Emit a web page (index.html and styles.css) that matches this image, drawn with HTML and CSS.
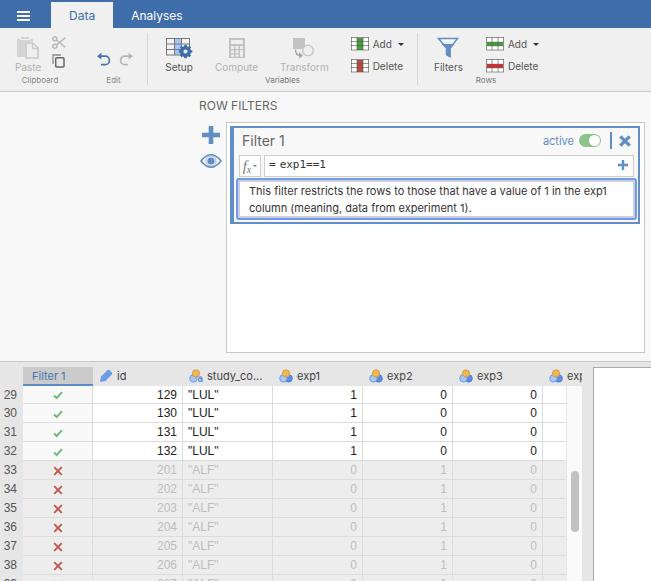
FILE: index.html
```html
<!DOCTYPE html>
<html lang="en">
<head>
<meta charset="utf-8">
<title>Row filters</title>
<link rel="stylesheet" href="styles.css">
</head>
<body>
<svg class="defs" aria-hidden="true">
  <symbol id="nominal" viewBox="0 0 14 14">
    <circle cx="9.6" cy="9.4" r="3.7" fill="#5b8fe6" stroke="#4a7dd6"/>
    <circle cx="4.4" cy="9.4" r="3.7" fill="#a9c6f5" stroke="#6d9be8"/>
    <circle cx="7" cy="4.4" r="3.6" fill="#efb75c" stroke="#d79a3c"/>
  </symbol>
  <symbol id="nominal-text" viewBox="0 0 14 14">
    <circle cx="4.4" cy="9.4" r="3.7" fill="#a9c6f5" stroke="#6d9be8"/>
    <circle cx="7" cy="4.4" r="3.6" fill="#efb75c" stroke="#d79a3c"/>
    <circle cx="11" cy="10.8" r="1.6" fill="none" stroke="#5b8fe6" stroke-width="1.3"/>
    <path d="M9.6 8.2q3.400-.9 3.400 1.200v3.600" fill="none" stroke="#5b8fe6" stroke-width="1.300"/>
  </symbol>
  <symbol id="tick" viewBox="0 0 12 12"><path d="M2 6.5 4.7 9 10 3.2" fill="none" stroke="#6fbb7c" stroke-width="2"/></symbol>
  <symbol id="cross" viewBox="0 0 12 12"><path d="M2.2 2.2l7.6 7.6M9.8 2.2L2.2 9.8" fill="none" stroke="#c4554d" stroke-width="1.9"/></symbol>
</svg>

<header class="tabs">
  <button class="menu" aria-label="Menu"><svg width="13" height="10" viewBox="0 0 13 10"><path d="M0 1h13M0 5h13M0 9h13" stroke="#fff" stroke-width="1.8"/></svg></button>
  <button class="tab selected">Data</button>
  <button class="tab">Analyses</button>
</header>

<div class="ribbon">
  <section class="group clipboard">
    <div class="tools">
      <button class="tool off"><svg width="24" height="24" viewBox="0 0 24 24"><path d="M1 3h4V1h8v2h4v3h-8v15H1z" fill="#d5d5d5"/><path d="M4 3.5h10" stroke="#efefef"/><path d="M10 7h7l5 5v10H10z" fill="#efefef" stroke="#c8c8c8" stroke-width="1.6"/><path d="M16.5 7v5.5H22" fill="none" stroke="#c8c8c8" stroke-width="1.4"/></svg>Paste</button>
      <div class="stack">
        <button aria-label="Cut"><svg width="14" height="13" viewBox="0 0 14 13"><g fill="none" stroke="#b8b8b8" stroke-width="1.5"><circle cx="2.8" cy="2.8" r="2"/><circle cx="2.8" cy="10.2" r="2"/><path d="M4.4 4l9 7.4M4.4 9l9-7.4"/></g></svg></button>
        <button aria-label="Copy"><svg width="13" height="14" viewBox="0 0 13 14"><path d="M1 10V1h8" fill="none" stroke="#8a8a8a" stroke-width="1.3"/><rect x="3.7" y="3.7" width="8.3" height="9.3" rx="1" fill="none" stroke="#666" stroke-width="1.5"/></svg></button>
      </div>
    </div>
    <h2>Clipboard</h2>
  </section>
  <section class="group edit">
    <div class="tools">
      <button aria-label="Undo"><svg width="14" height="14" viewBox="0 0 14 14"><path d="M2 4.2h6.2a4.2 4.2 0 0 1 0 8.4H4" fill="none" stroke="#4674b2" stroke-width="1.7"/><path d="M0 4.2 4.4.8v6.8z" fill="#4674b2"/></svg></button>
      <button aria-label="Redo"><svg width="14" height="14" viewBox="0 0 14 14"><path d="M12 4.2H5.8a4.2 4.2 0 0 0 0 8.4H9" fill="none" stroke="#b5b5b5" stroke-width="1.7"/><path d="M14 4.2 9.6.8v6.8z" fill="#b5b5b5"/></svg></button>
    </div>
    <h2>Edit</h2>
  </section>
  <section class="group variables">
    <div class="tools">
      <button class="tool setup"><svg width="28" height="24" viewBox="0 0 28 24"><path d="M1 2h24v17H1z" fill="#f3f3f3"/><path d="M9.5 2h7v17h-7z" fill="#a6c5f4"/><path d="M1 2.5h24M1 8h24M1 13.500h24M1 19h24M1.500 2v17M9.500 2v17M16.500 2v17M24.500 2v17" stroke="#777" fill="none"/><circle cx="20.500" cy="15.500" r="3.800" fill="#efefef" stroke="#3e6da9" stroke-width="3.400"/><path d="M20.500 8.700v3M20.500 19.300v3M13.700 15.500h3M24.300 15.500h3M15.700 10.700l2 2M23.300 18.300l2 2M15.700 20.300l2-2M23.300 12.700l2-2" stroke="#3e6da9" stroke-width="2.600"/></svg>Setup</button>
      <button class="tool off"><svg width="24" height="24" viewBox="0 0 24 24"><path d="M4 2h16v20H4z" fill="#c2c2c2"/><path d="M6 4h12v4H6zM6 10h3v3H6zM10.500 10h3v3h-3zM15 10h3v3h-3zM6 14.200h3v3H6zM10.500 14.200h3v3h-3zM6 18.400h3v2.300H6zM10.500 18.400h3v2.300h-3zM15 14.200h3v6.500h-3z" fill="#efefef"/></svg>Compute</button>
      <button class="tool off"><svg width="24" height="24" viewBox="0 0 24 24"><path d="M1 2h12v11H1z" fill="#c2c2c2"/><circle cx="16" cy="14.500" r="5.300" fill="#efefef" stroke="#c8c8c8" stroke-width="1.500"/><path d="M3.500 13.500q0 6 5 6" fill="none" stroke="#a8a8a8" stroke-width="1.600"/><path d="M7 16l4 3.500L7 22.500z" fill="#a8a8a8"/></svg>Transform</button>
      <div class="rows">
        <button class="row"><svg width="18" height="14" viewBox="0 0 18 14"><path d="M1 1h16v12H1z" fill="#fff"/><path d="M6 1h6v12H6z" fill="#479c3c"/><path d="M0 .5h18M0 4.500h18M0 8.500h18M0 13h18M.5 0v13M6 0v13M12 0v13M17.500 0v13" stroke="#555" stroke-opacity=".6"/></svg>Add<i class="caret"></i></button>
        <button class="row"><svg width="18" height="14" viewBox="0 0 18 14"><path d="M1 1h16v12H1z" fill="#fff"/><path d="M6 1h6v12H6z" fill="#c04a42"/><path d="M0 .5h18M0 4.500h18M0 8.500h18M0 13h18M.5 0v13M6 0v13M12 0v13M17.500 0v13" stroke="#555" stroke-opacity=".6"/></svg>Delete</button>
      </div>
    </div>
    <h2>Variables</h2>
  </section>
  <section class="group rowtools">
    <div class="tools">
      <button class="tool filters"><svg width="24" height="24" viewBox="0 0 24 24"><path d="M2.500 2.600h19L14 12v8.500l-3.500-2V12z" fill="#f3f3f3" stroke="#628dc5" stroke-width="1.500"/><path d="M5.500 8h13L14.500 12.500v9.300l-4-2.500v-7z" fill="#628dc5"/></svg>Filters</button>
      <div class="rows">
        <button class="row"><svg width="18" height="14" viewBox="0 0 18 14"><path d="M1 1h16v12H1z" fill="#fff"/><path d="M1 5h16v4H1z" fill="#479c3c"/><path d="M0 .5h18M0 13h18M.5 0v13M6 0v13M12 0v13M17.500 0v13" stroke="#555" stroke-opacity=".6"/><path d="M0 5h18M0 9h18" stroke="#555" stroke-opacity=".35"/></svg>Add<i class="caret"></i></button>
        <button class="row"><svg width="18" height="14" viewBox="0 0 18 14"><path d="M1 1h16v12H1z" fill="#fff"/><path d="M1 5h16v4H1z" fill="#d03030"/><path d="M0 .5h18M0 13h18M.5 0v13M6 0v13M12 0v13M17.500 0v13" stroke="#555" stroke-opacity=".6"/><path d="M0 5h18M0 9h18" stroke="#555" stroke-opacity=".35"/></svg>Delete</button>
      </div>
    </div>
    <h2>Rows</h2>
  </section>
</div>

<main class="panel">
  <h1>ROW FILTERS</h1>
  <div class="editor">
    <div class="side">
      <button aria-label="Add filter"><svg width="18" height="18" viewBox="0 0 18 18"><path d="M9 0v18M0 9h18" stroke="#628dc5" stroke-width="4.600"/></svg></button>
      <button aria-label="Show filtered rows"><svg width="22" height="14" viewBox="0 0 22 14"><path d="M1 7q10-12.500 20 0q-10 12.500-20 0z" fill="#f8f8f8" stroke="#628dc5" stroke-width="1.600"/><circle cx="11" cy="7" r="5" fill="none" stroke="#628dc5" stroke-width=".6"/><circle cx="11" cy="7" r="3.600" fill="#628dc5"/></svg></button>
    </div>
    <div class="list">
      <article class="filter">
        <div class="title">
          <span class="name">Filter 1</span>
          <label class="active">active<input type="checkbox" role="switch" checked></label>
          <button class="close" aria-label="Remove filter"><svg width="12" height="12" viewBox="0 0 12 12"><path d="M1.300 1.300l9.400 9.400M10.700 1.300l-9.400 9.400" stroke="#628dc5" stroke-width="3.300"/></svg></button>
        </div>
        <div class="formula">
          <button class="fx" aria-label="Functions"><em>f<sub>x</sub></em><i class="caret"></i></button>
          <div class="box"><label for="expr">=</label><input id="expr" value="exp1==1"><button aria-label="Add expression"><svg width="10" height="10" viewBox="0 0 10 10"><path d="M5 0v10M0 5h10" stroke="#628dc5" stroke-width="2.400"/></svg></button></div>
        </div>
        <textarea class="note" rows="2" aria-label="Description">This filter restricts the rows to those that have a value of 1 in the exp1 column (meaning, data from experiment 1).</textarea>
      </article>
    </div>
  </div>
</main>

<div class="bottom">
  <div class="sheet">
    <table>
      <colgroup><col class="c-num"><col class="c-filter"><col><col><col><col><col><col></colgroup>
      <thead><tr><th></th><th class="fcol">Filter 1</th>
        <th><span><svg width="14" height="14" viewBox="0 0 14 14"><path d="M1 13l1-5.500L8.500 1.200q1-.8 2 0l2.300 2.300q.8 1 0 2L6.500 12z" fill="#6b9ce8"/></svg>id</span></th>
        <th><span><svg width="14" height="14"><use href="#nominal-text"/></svg>study_co...</span></th>
        <th><span><svg width="14" height="14"><use href="#nominal"/></svg>exp1</span></th>
        <th><span><svg width="14" height="14"><use href="#nominal"/></svg>exp2</span></th>
        <th><span><svg width="14" height="14"><use href="#nominal"/></svg>exp3</span></th>
        <th><span><svg width="14" height="14"><use href="#nominal"/></svg>exp4</span></th></tr></thead>
      <tbody>
        <tr><th>29</th><td class="mark"><svg><use href="#tick"/></svg></td><td>129</td><td class="text">"LUL"</td><td>1</td><td>0</td><td>0</td><td></td></tr>
        <tr><th>30</th><td class="mark"><svg><use href="#tick"/></svg></td><td>130</td><td class="text">"LUL"</td><td>1</td><td>0</td><td>0</td><td></td></tr>
        <tr><th>31</th><td class="mark"><svg><use href="#tick"/></svg></td><td>131</td><td class="text">"LUL"</td><td>1</td><td>0</td><td>0</td><td></td></tr>
        <tr><th>32</th><td class="mark"><svg><use href="#tick"/></svg></td><td>132</td><td class="text">"LUL"</td><td>1</td><td>0</td><td>0</td><td></td></tr>
        <tr class="out"><th>33</th><td class="mark"><svg><use href="#cross"/></svg></td><td>201</td><td class="text">"ALF"</td><td>0</td><td>1</td><td>0</td><td></td></tr>
        <tr class="out"><th>34</th><td class="mark"><svg><use href="#cross"/></svg></td><td>202</td><td class="text">"ALF"</td><td>0</td><td>1</td><td>0</td><td></td></tr>
        <tr class="out"><th>35</th><td class="mark"><svg><use href="#cross"/></svg></td><td>203</td><td class="text">"ALF"</td><td>0</td><td>1</td><td>0</td><td></td></tr>
        <tr class="out"><th>36</th><td class="mark"><svg><use href="#cross"/></svg></td><td>204</td><td class="text">"ALF"</td><td>0</td><td>1</td><td>0</td><td></td></tr>
        <tr class="out"><th>37</th><td class="mark"><svg><use href="#cross"/></svg></td><td>205</td><td class="text">"ALF"</td><td>0</td><td>1</td><td>0</td><td></td></tr>
        <tr class="out"><th>38</th><td class="mark"><svg><use href="#cross"/></svg></td><td>206</td><td class="text">"ALF"</td><td>0</td><td>1</td><td>0</td><td></td></tr>
        <tr class="out"><th>39</th><td class="mark"><svg><use href="#cross"/></svg></td><td>207</td><td class="text">"ALF"</td><td>0</td><td>1</td><td>0</td><td></td></tr>
      </tbody>
    </table>
    <div class="scroll"><div class="thumb"></div></div>
  </div>
  <div class="results"></div>
</div>
</body>
</html>
```
FILE: styles.css
```css
* { box-sizing: border-box; }
body {
  margin: 0;
  height: 100vh;
  display: flex;
  flex-direction: column;
  overflow: hidden;
  font: 11px/14px Inter, "Liberation Sans", sans-serif;
  color: #555;
  background: #f8f8f8;
}
button {
  font: inherit;
  color: inherit;
  background: none;
  border: 0;
  padding: 0;
}
svg { display: block; flex: none; }
h1, h2 { margin: 0; font-weight: 400; }
.defs { position: absolute; width: 0; height: 0; }

/* Tab bar */
.tabs {
  flex: none;
  display: flex;
  height: 28px;
  padding-top: 2px;
  background: #3e6da9;
  color: #fff;
}
.menu { width: 51px; padding: 2px 0 0 17px; }
.tab { padding: 2px 18px 0; font-size: 12px; }
.tab.selected { background: #f0f0f0; color: #3e6da9; }

/* Ribbon */
.ribbon {
  flex: none;
  display: flex;
  height: 64px;
  padding: 5px 0 6px;
  background: #f0f0f0;
  border-bottom: 1px solid #c8c8c8;
  font-size: 10px;
}
.group { display: flex; flex-direction: column; }
.group h2 {
  font-size: 8px;
  line-height: 10px;
  padding-top: 1px;
  text-align: center;
  color: #777;
}
.tools { display: flex; height: 43px; }
.tool {
  display: flex;
  flex-direction: column;
  align-items: center;
  padding-top: 3px;
}
.off { color: #b0b0b0; }
.clipboard { width: 80px; }
.clipboard .tools { padding-left: 15px; gap: 11px; }
.stack { display: flex; flex-direction: column; gap: 5px; padding-top: 3px; }
.edit { width: 68px; border-right: 1px solid #d6d6d6; }
.edit .tools { padding: 10px 0 0 17px; gap: 8px; align-items: center; }
.edit h2, .clipboard h2 { color: #888; }
.variables { width: 270px; border-right: 1px solid #d6d6d6; }
.variables .tools { padding-left: 17px; gap: 22px; }
.rowtools { width: 134px; margin-left: 1px; }
.rowtools .tools { padding-left: 15px; gap: 23px; }
.rows { display: flex; flex-direction: column; gap: 8px; padding-top: 4px; }
.row { display: flex; align-items: center; gap: 4px; }
.caret {
  width: 0;
  height: 0;
  margin-left: 2px;
  border: 3px solid transparent;
  border-top-color: #333;
  border-bottom-width: 0;
}

/* Filter panel */
.panel {
  flex: none;
  height: 270px;
  padding: 7px 6px 8px 199px;
  display: flex;
  flex-direction: column;
  border-bottom: 1px solid #c8c8c8;
}
h1 { font-size: 12px; line-height: 14px; color: #666; }
.editor { flex: 1; display: flex; padding-top: 9px; }
.side {
  width: 27px;
  display: flex;
  flex-direction: column;
  gap: 10px;
  padding: 4px 0 0 1px;
}
.side button { width: 22px; display: flex; justify-content: center; }
.list {
  flex: 1;
  padding: 3px 4px 3px 3px;
  background: #fff;
  border: 1px solid #c8c8c8;
}
.filter {
  border: 2px solid #628dc5;
  border-left-width: 4px;
  background: #f8f8f8;
}
.title {
  display: flex;
  align-items: center;
  height: 27px;
  padding: 0 7px 2px 8px;
}
.name { flex: 1; font-size: 14px; color: #666; }
.active { display: flex; align-items: center; gap: 5px; color: #628dc5; }
.active input {
  appearance: none;
  width: 22px;
  height: 13px;
  margin: 0;
  padding: 1px;
  border-radius: 7px;
  background: #8bc38b;
}
.active input::before {
  content: "";
  display: block;
  width: 11px;
  height: 11px;
  margin-left: auto;
  border-radius: 50%;
  background: #fff;
}
.close {
  margin-left: 9px;
  padding: 3px 0 2px 7px;
  border-left: 2px solid #628dc5;
}
.formula { display: flex; gap: 3px; padding: 0 4px 0 5px; }
.fx {
  display: flex;
  align-items: center;
  justify-content: center;
  width: 22px;
  height: 22px;
  border: 1px solid #ccc;
  background: #fff;
  font: 15px/18px "Liberation Serif", serif;
  color: #777;
}
.fx sub { font-size: 10px; line-height: 0; vertical-align: -2px; }
.fx .caret { border-width: 2px 2px 0; border-top-color: #777; }
.box {
  flex: 1;
  display: flex;
  align-items: center;
  height: 22px;
  padding: 0 5px 2px 4px;
  border: 1px solid #ccc;
  background: #fff;
  font: 11px/14px "DejaVu Sans Mono", monospace;
  color: #333;
}
.box input {
  flex: 1;
  min-width: 0;
  margin-left: 4px;
  padding: 0;
  border: 0;
  font: inherit;
  color: inherit;
}
.note {
  display: block;
  width: calc(100% - 3px);
  height: 42px;
  margin: 1px 1px 2px 2px;
  padding: 3px 6px 3px 11px;
  border: 2px solid #7099f5;
  border-radius: 3px;
  outline: 0;
  box-shadow: inset 0 0 0 2px #cdcdd6;
  background: #fff;
  resize: none;
  overflow: hidden;
  font: 11px/17px Inter, sans-serif;
  color: #333;
}

/* Data sheet */
.bottom {
  flex: 1;
  min-height: 0;
  display: flex;
  gap: 11px;
  padding-top: 5px;
  background: #e6e6e6;
}
.sheet { flex: 1; min-width: 0; position: relative; overflow: hidden; }
.results {
  width: 58px;
  border: solid #aaa;
  border-width: 1px 0 0 1px;
  background: #fff;
}
table {
  width: 633px;
  table-layout: fixed;
  border-collapse: separate;
  border-spacing: 0;
}
.c-num { width: 23px; }
.c-filter { width: 70px; }
th, td { height: 19px; padding: 0; font-weight: 400; }
thead th { text-align: left; font-size: 11px; color: #444; }
thead th span { display: flex; align-items: center; gap: 4px; padding: 0 0 1px 6px; }
thead .fcol {
  padding-left: 9px;
  background: #cbcbcb;
  border-bottom: 2px solid #5a8bcb;
  color: #4674b2;
}
tbody th {
  padding-right: 6px;
  text-align: right;
  font: 12px/14px "Liberation Sans", sans-serif;
  color: #555;
}
tbody td {
  padding-right: 5px;
  text-align: right;
  font: 12px/14px "Liberation Sans", sans-serif;
  color: #222;
  background: #fff;
  border: solid #dcdcdc;
  border-width: 0 1px 1px 0;
}
tbody tr:first-child > * { height: 18px; }
tbody th { padding-bottom: 1px; }
tbody td.text { text-align: left; padding-left: 5px; }
tbody td.mark { padding: 0; background: #f9f9f9; }
.mark svg { width: 12px; height: 12px; margin: 1px auto 0; }
.out td, .out td.mark { background: #ededed; color: #bdbdbd; }
.scroll {
  position: absolute;
  top: 19px;
  right: 0;
  bottom: 0;
  width: 16px;
  border-left: 1px solid #e6e6e6;
  background: #fafafa;
}
.thumb {
  width: 8px;
  height: 61px;
  margin: 85px 0 0 4px;
  border-radius: 4px;
  background: #c1c1c1;
}
```
